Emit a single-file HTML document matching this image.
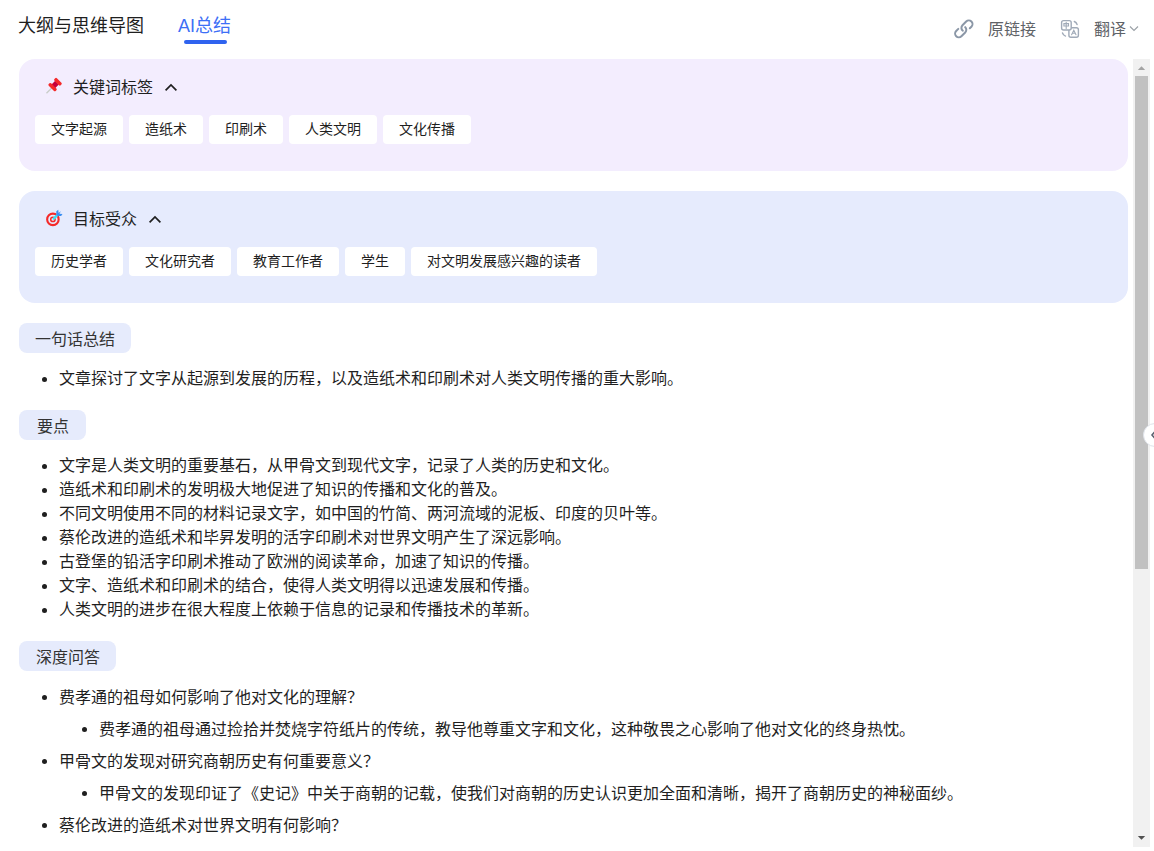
<!DOCTYPE html>
<html lang="zh-CN"><head><meta charset="utf-8">
<style>
*{margin:0;padding:0;box-sizing:border-box}
html,body{width:1154px;height:851px;overflow:hidden;background:#fff;font-family:"Liberation Sans",sans-serif;color:#222}
.a{position:absolute;white-space:nowrap}
.tab1{left:18px;top:14px;font-size:18px;line-height:24px;color:#1f1f1f}
.tab2{left:178px;top:14px;font-size:18px;line-height:24px;color:#3d6ff6}
.uline{left:184px;top:40px;width:43px;height:4px;border-radius:2px;background:#2f63ef}
.rt{font-size:16px;line-height:24px;color:#5f6368}
.sb{left:1133px;top:59px;width:17px;height:788px;background:#f1f1f1}
.thumb{left:1135px;top:76px;width:13px;height:493px;background:#c1c1c1}
.card{left:19px;width:1109px;height:112px;border-radius:16px}
.c1{top:59px;background:#f3edfe}
.c2{top:191px;background:#e6ebfd}
.ht{font-size:16px;line-height:24px;color:#1f1f1f}
.tag{background:#fff;border-radius:4px;height:29px;line-height:28px;font-size:14px;text-align:center;color:#1f1f1f}
.lbl{left:19px;height:30px;line-height:33px;border-radius:8px;background:#e6ebfc;font-size:16px;color:#333;text-align:center}
.li{left:59px;font-size:16px;line-height:24px;color:#1f1f1f}
.dot{width:5.2px;height:5.2px;border-radius:50%;background:#1f1f1f}
</style></head><body>
<div class="a tab1">大纲与思维导图</div>
<div class="a tab2">AI总结</div>
<div class="a uline"></div>

<svg class="a" style="left:950px;top:15px" width="30" height="30" viewBox="0 0 30 30" fill="none" stroke="#8b97a7" stroke-width="2" stroke-linecap="round">
<path d="M12.88 15.76A3.7 3.7 0 0 1 12.48 10.18L16.18 6.48A3.7 3.7 0 0 1 21.42 11.72L19.8 13.3"/>
<path d="M8.3 13.85L6.18 15.98A3.7 3.7 0 0 0 11.42 21.22L15.22 17.42A3.7 3.7 0 0 0 15.22 12.18"/>
</svg>
<div class="a rt" style="left:987.6px;top:18px">原链接</div>

<svg class="a" style="left:1056px;top:15px" width="30" height="30" viewBox="0 0 30 30" fill="none" stroke="#a0aab8" stroke-width="1.4" stroke-linecap="round">
<rect x="12.9" y="12.7" width="9.5" height="9.5" rx="2"/>
<rect x="5.6" y="5.6" width="9.6" height="9.4" rx="2" fill="#fff"/>
<path d="M10.2 7.4V13.6M7.9 8.6H12.5V11H7.9Z" stroke-width="1.1"/>
<path d="M15.6 19.7L17.8 15.2L20 19.7M16.4 18.2H19.2" stroke-width="1.1"/>
<path d="M18.3 6.5A5 5 0 0 1 21.1 9.5M6.5 18A5 5 0 0 0 9.5 21.1"/>
</svg>
<div class="a rt" style="left:1093.7px;top:18px">翻译</div>
<svg class="a" style="left:1128px;top:24px" width="12" height="9" viewBox="0 0 12 9" fill="none" stroke="#9aa0a6" stroke-width="1.1"><path d="M2 2.5L6 6.5L10 2.5"/></svg>

<div class="a card c1"></div>
<svg class="a" style="left:44px;top:76px" width="20" height="20" viewBox="0 0 20 20">
<g transform="translate(8.5 11.2) rotate(45)">
<line x1="0" y1="0" x2="0" y2="8.5" stroke="#c9cdc9" stroke-width="1.3"/>
<rect x="-2.6" y="-6.4" width="5.2" height="5.4" fill="#c4003b"/>
<rect x="-4.9" y="-1.8" width="9.8" height="3.4" rx="1.2" fill="#f42a2a"/>
<rect x="-4.4" y="-9.4" width="8.8" height="3.4" rx="1.2" fill="#f42a2a"/>
</g>
</svg>
<div class="a ht" style="left:72.7px;top:76px">关键词标签</div>
<svg class="a" style="left:163px;top:81px" width="16" height="12" viewBox="0 0 16 12" fill="none" stroke="#1f1f1f" stroke-width="1.7"><path d="M2.6 9.3L8 3.9L13.4 9.3"/></svg>
<div class="a tag" style="left:35px;top:115px;width:88px">文字起源</div>
<div class="a tag" style="left:129px;top:115px;width:74px">造纸术</div>
<div class="a tag" style="left:209px;top:115px;width:74px">印刷术</div>
<div class="a tag" style="left:289px;top:115px;width:88px">人类文明</div>
<div class="a tag" style="left:383px;top:115px;width:88px">文化传播</div>

<div class="a card c2"></div>
<svg class="a" style="left:40px;top:205px" width="30" height="30" viewBox="0 0 30 30">
<circle cx="12.9" cy="14.4" r="5.75" fill="none" stroke="#f42a2a" stroke-width="2.1"/>
<circle cx="12.9" cy="14.4" r="2.2" fill="none" stroke="#f42a2a" stroke-width="1.5"/>
<g transform="translate(12.9 14.4) rotate(45)">
<path d="M0 -1.2V-6.5" stroke="#3ddcf3" stroke-width="2.4" stroke-linecap="round"/>
<path d="M-0.9 -5.8L-3.4 -8.2L-3.0 -10.6L-0.6 -8.6L0 -11.4L0.6 -8.6L3.0 -10.6L3.4 -8.2L0.9 -5.8Z" fill="#3b8ff2"/>
</g>
</svg>
<div class="a ht" style="left:73px;top:208px">目标受众</div>
<svg class="a" style="left:147px;top:213px" width="16" height="12" viewBox="0 0 16 12" fill="none" stroke="#1f1f1f" stroke-width="1.7"><path d="M2.6 9.3L8 3.9L13.4 9.3"/></svg>
<div class="a tag" style="left:35px;top:247px;width:88px">历史学者</div>
<div class="a tag" style="left:129px;top:247px;width:102px">文化研究者</div>
<div class="a tag" style="left:237px;top:247px;width:102px">教育工作者</div>
<div class="a tag" style="left:345px;top:247px;width:60px">学生</div>
<div class="a tag" style="left:411px;top:247px;width:186px">对文明发展感兴趣的读者</div>

<div class="a lbl" style="top:323px;width:112px">一句话总结</div>
<div class="a dot" style="left:41.9px;top:376.9px"></div>
<div class="a li" style="top:367px">文章探讨了文字从起源到发展的历程，以及造纸术和印刷术对人类文明传播的重大影响。</div>

<div class="a lbl" style="top:410px;width:67px">要点</div>
<div class="a dot" style="left:41.9px;top:463.9px"></div><div class="a li" style="top:454px">文字是人类文明的重要基石，从甲骨文到现代文字，记录了人类的历史和文化。</div>
<div class="a dot" style="left:41.9px;top:487.9px"></div><div class="a li" style="top:478px">造纸术和印刷术的发明极大地促进了知识的传播和文化的普及。</div>
<div class="a dot" style="left:41.9px;top:511.9px"></div><div class="a li" style="top:502px">不同文明使用不同的材料记录文字，如中国的竹简、两河流域的泥板、印度的贝叶等。</div>
<div class="a dot" style="left:41.9px;top:535.9px"></div><div class="a li" style="top:526px">蔡伦改进的造纸术和毕昇发明的活字印刷术对世界文明产生了深远影响。</div>
<div class="a dot" style="left:41.9px;top:559.9px"></div><div class="a li" style="top:550px">古登堡的铅活字印刷术推动了欧洲的阅读革命，加速了知识的传播。</div>
<div class="a dot" style="left:41.9px;top:583.9px"></div><div class="a li" style="top:574px">文字、造纸术和印刷术的结合，使得人类文明得以迅速发展和传播。</div>
<div class="a dot" style="left:41.9px;top:607.9px"></div><div class="a li" style="top:598px">人类文明的进步在很大程度上依赖于信息的记录和传播技术的革新。</div>

<div class="a lbl" style="top:641px;width:97px">深度问答</div>
<div class="a dot" style="left:41.9px;top:694.9px"></div><div class="a li" style="top:686px">费孝通的祖母如何影响了他对文化的理解？</div>
<div class="a dot" style="left:81.9px;top:726.9px"></div><div class="a li" style="left:99px;top:718px">费孝通的祖母通过捡拾并焚烧字符纸片的传统，教导他尊重文字和文化，这种敬畏之心影响了他对文化的终身热忱。</div>
<div class="a dot" style="left:41.9px;top:758.9px"></div><div class="a li" style="top:750px">甲骨文的发现对研究商朝历史有何重要意义？</div>
<div class="a dot" style="left:81.9px;top:790.9px"></div><div class="a li" style="left:99px;top:782px">甲骨文的发现印证了《史记》中关于商朝的记载，使我们对商朝的历史认识更加全面和清晰，揭开了商朝历史的神秘面纱。</div>
<div class="a dot" style="left:41.9px;top:822.9px"></div><div class="a li" style="top:814px">蔡伦改进的造纸术对世界文明有何影响？</div>

<div class="a sb"></div>
<div class="a thumb"></div>
<svg class="a" style="left:1133px;top:62px" width="17" height="12" viewBox="0 0 17 12"><path d="M4.8 8L8.5 4.2L12.2 8Z" fill="#a3a3a3"/></svg>
<svg class="a" style="left:1133px;top:832px" width="17" height="12" viewBox="0 0 17 12"><path d="M4.8 4L12.2 4L8.5 7.8Z" fill="#505050"/></svg>
<div class="a" style="left:1142.5px;top:423px;width:24px;height:24px;border-radius:50%;background:#fff;border:1px solid #dfe3ea"></div>
<svg class="a" style="left:1147.5px;top:429px" width="8" height="12" viewBox="0 0 8 12" fill="none" stroke="#5a6270" stroke-width="1.6"><path d="M7 2.5L4 6L7 9.5"/></svg>
</body></html>
